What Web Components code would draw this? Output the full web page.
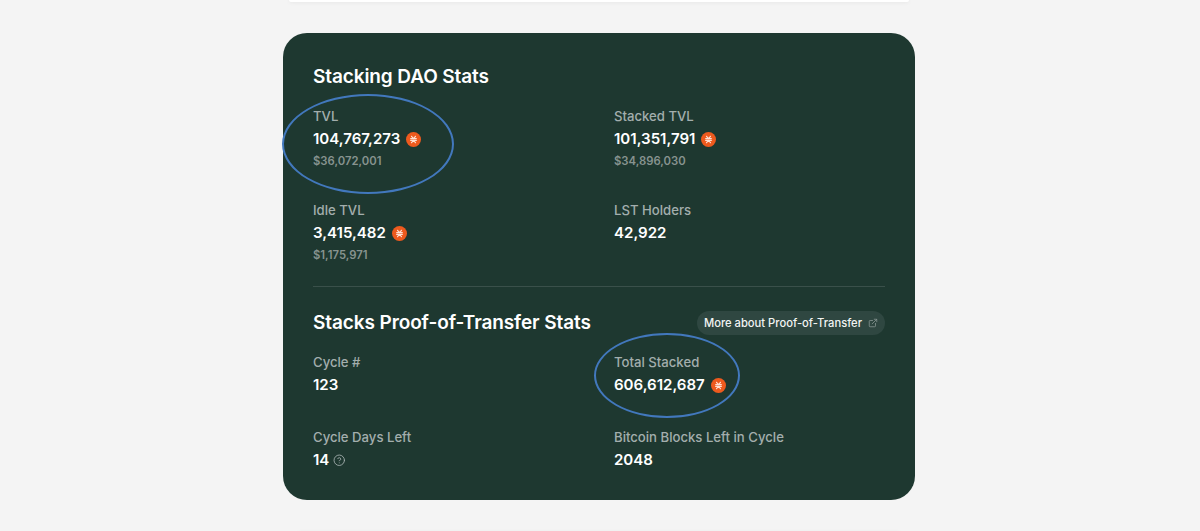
<!DOCTYPE html>
<html lang="en">
<head>
<meta charset="utf-8">
<title>Stacking DAO Stats</title>
<style>
  html, body { margin: 0; height: 100%; overflow: hidden; background: #f4f4f4; }
  body { font-family: Inter, "Liberation Sans", sans-serif; }
</style>
</head>
<body>
<template id="stx-tpl">
  <style>
    :host { display: inline-block; width: 15px; height: 15px; flex: none; }
    svg { display: block; width: 15px; height: 15px; }
  </style>
  <svg viewBox="0 0 16 16" aria-hidden="true">
    <circle cx="8" cy="8" r="8" fill="#ee5a1e"/>
    <path d="M5 7h6M5 9h6M5.9 4.6 8 7l2.1-2.4M5.9 11.4 8 9l2.1 2.4" fill="none" stroke="#ffe0d3" stroke-width="1.25" stroke-linecap="round"/>
  </svg>
</template>

<template id="stat-tpl">
  <style>
    :host { display: block; }
    .label { font-size: 13.15px; line-height: 20px; font-weight: 500; color: #a3aead; }
    .value { display: flex; align-items: center; gap: 6px; margin-top: 1px; font-size: 15.05px; line-height: 24px; font-weight: 600; color: #fff; }
    .sub { margin-top: 2px; font-size: 11.3px; line-height: 16px; font-weight: 600; color: #87938f; }
    .sub:empty { display: none; }
  </style>
  <div class="label"></div>
  <div class="value"><span class="num"></span><slot></slot></div>
  <div class="sub"></div>
</template>

<template id="button-tpl">
  <style>
    :host { display: inline-flex; align-items: center; gap: 6px; height: 24px; padding: 0 7px; border-radius: 12px; background: #2f4741; color: #f2f4f3; font-size: 11.2px; font-weight: 500; white-space: nowrap; }
    svg { width: 10px; height: 10px; display: block; }
  </style>
  <slot></slot>
  <svg viewBox="0 0 24 24" fill="none" stroke="#84938f" stroke-width="2" stroke-linecap="round" stroke-linejoin="round">
    <path d="M18 13v6a2 2 0 0 1-2 2H5a2 2 0 0 1-2-2V8a2 2 0 0 1 2-2h6"/>
    <path d="M15 3h6v6"/>
    <path d="M10 14 21 3"/>
  </svg>
</template>

<template id="card-tpl">
  <style>
    :host { display: block; flex: none; position: relative; box-sizing: border-box; width: 632px; height: 467px; margin-top: 31px; padding: 30px; border-radius: 24px; background: #1e3830; color: #fff; }
    .head { display: flex; align-items: center; justify-content: space-between; height: 28px; }
    h2 { margin: 0; font-size: 19px; line-height: 28px; font-weight: 600; letter-spacing: -.1px; }
    .grid { display: grid; grid-template-columns: 1fr 1fr; column-gap: 30px; }
    .one { margin-top: 15px; row-gap: 31px; }
    .two { margin-top: 15px; row-gap: 30px; }
    hr { height: 1px; border: 0; margin: 23px 0 22px; background: #3a504a; }
    .ring { position: absolute; box-sizing: border-box; border: 2px solid #4278bd; border-radius: 50%; pointer-events: none; }
    .r1 { left: -1px; top: 61px; width: 172px; height: 100px; }
    .r2 { left: 311px; top: 300px; width: 146px; height: 85px; }
    .q { display: block; width: 12.5px; height: 12.5px; margin-left: -2px; }
  </style>
  <div class="head"><h2>Stacking DAO Stats</h2></div>
  <div class="grid one">
    <dao-stat label="TVL" value="104,767,273" sub="$36,072,001"><stx-icon></stx-icon></dao-stat>
    <dao-stat label="Stacked TVL" value="101,351,791" sub="$34,896,030"><stx-icon></stx-icon></dao-stat>
    <dao-stat label="Idle TVL" value="3,415,482" sub="$1,175,971"><stx-icon></stx-icon></dao-stat>
    <dao-stat label="LST Holders" value="42,922"></dao-stat>
  </div>
  <hr>
  <div class="head"><h2>Stacks Proof-of-Transfer Stats</h2><more-button>More about Proof-of-Transfer</more-button></div>
  <div class="grid two">
    <dao-stat label="Cycle #" value="123"></dao-stat>
    <dao-stat label="Total Stacked" value="606,612,687"><stx-icon></stx-icon></dao-stat>
    <dao-stat label="Cycle Days Left" value="14">
      <svg class="q" viewBox="0 0 24 24" fill="none" stroke="#a3aead" stroke-width="1.7" stroke-linecap="round" stroke-linejoin="round">
        <circle cx="12" cy="12" r="10"/>
        <path d="M9.1 9a3 3 0 0 1 5.8 1c0 2-3 3-3 3"/>
        <path d="M12 17h.01"/>
      </svg>
    </dao-stat>
    <dao-stat label="Bitcoin Blocks Left in Cycle" value="2048"></dao-stat>
  </div>
  <div class="ring r1"></div>
  <div class="ring r2"></div>
</template>

<template id="page-tpl">
  <style>
    :host { display: flex; flex-direction: column; align-items: center; box-sizing: border-box; height: 531px; padding-right: 2px; overflow: hidden; background: #f4f4f4; }
    .sheet { flex: none; box-sizing: border-box; width: 620px; }
    .top { height: 2px; border-radius: 0 0 14px 14px; background: #fff; box-shadow: 0 0 4px rgba(0,0,0,.10); }
    .bottom { height: 24px; margin-top: 31px; border-radius: 14px 14px 0 0; background: #f7f7f7; box-shadow: 0 0 3px rgba(0,0,0,.04); }
  </style>
  <div class="sheet top"></div>
  <stats-card></stats-card>
  <div class="sheet bottom"></div>
</template>

<stats-page></stats-page>

<script>
  class TplElement extends HTMLElement {
    connectedCallback() {
      if (this.shadowRoot) return;
      const tpl = document.getElementById(this.constructor.tpl);
      this.attachShadow({ mode: 'open' }).appendChild(tpl.content.cloneNode(true));
      this.render();
    }
    render() {}
  }

  class StxIcon extends TplElement { static tpl = 'stx-tpl'; }
  class MoreButton extends TplElement { static tpl = 'button-tpl'; }
  class StatsCard extends TplElement { static tpl = 'card-tpl'; }
  class StatsPage extends TplElement { static tpl = 'page-tpl'; }

  class DaoStat extends TplElement {
    static tpl = 'stat-tpl';
    render() {
      const root = this.shadowRoot;
      root.querySelector('.label').textContent = this.getAttribute('label');
      root.querySelector('.num').textContent = this.getAttribute('value');
      root.querySelector('.sub').textContent = this.getAttribute('sub') || '';
    }
  }

  customElements.define('stx-icon', StxIcon);
  customElements.define('more-button', MoreButton);
  customElements.define('dao-stat', DaoStat);
  customElements.define('stats-card', StatsCard);
  customElements.define('stats-page', StatsPage);
</script>
</body>
</html>
